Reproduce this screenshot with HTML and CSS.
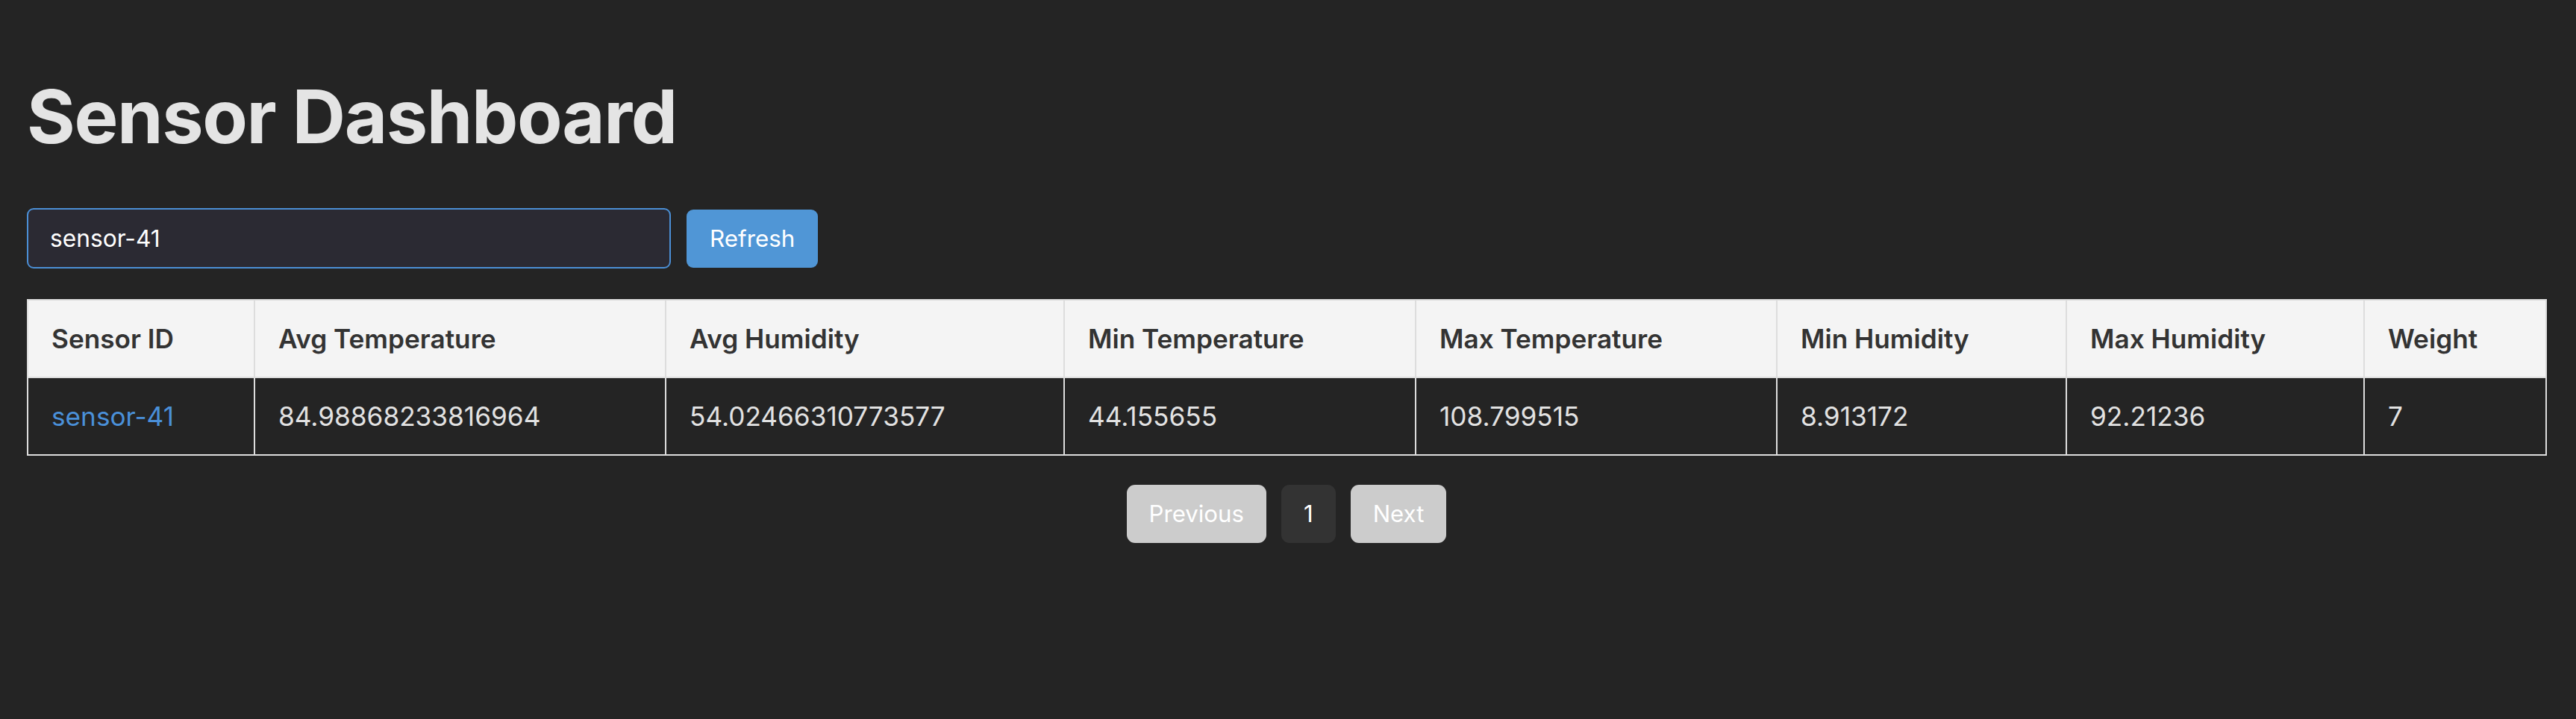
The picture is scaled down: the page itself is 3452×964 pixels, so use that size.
FILE: index.html
```html
<!DOCTYPE html>
<html lang="en">
<head>
<meta charset="utf-8">
<title>Sensor Dashboard</title>
<link rel="stylesheet" href="styles.css">
</head>
<body>
<main class="page">
  <h1 class="title">Sensor Dashboard</h1>
  <div class="controls">
    <input class="search" type="text" value="sensor-41">
    <button class="btn-primary" type="button">Refresh</button>
  </div>
  <table class="data-table">
    <colgroup>
      <col class="c-id">
      <col class="c-avgt">
      <col class="c-avgh">
      <col class="c-mint">
      <col class="c-maxt">
      <col class="c-minh">
      <col class="c-maxh">
      <col class="c-w">
    </colgroup>
    <thead>
      <tr>
        <th>Sensor ID</th>
        <th>Avg Temperature</th>
        <th>Avg Humidity</th>
        <th>Min Temperature</th>
        <th>Max Temperature</th>
        <th>Min Humidity</th>
        <th>Max Humidity</th>
        <th>Weight</th>
      </tr>
    </thead>
    <tbody>
      <tr>
        <td><a class="sensor-link" href="#">sensor-41</a></td>
        <td>84.98868233816964</td>
        <td>54.02466310773577</td>
        <td>44.155655</td>
        <td>108.799515</td>
        <td>8.913172</td>
        <td>92.21236</td>
        <td>7</td>
      </tr>
    </tbody>
  </table>
  <nav class="pagination">
    <button class="page-btn page-btn--disabled" type="button">Previous</button>
    <button class="page-btn page-btn--current" type="button">1</button>
    <button class="page-btn page-btn--disabled" type="button">Next</button>
  </nav>
</main>
</body>
</html>
```
FILE: styles.css
```css
html, body {
  margin: 0;
  padding: 0;
  background: #242424;
}

body {
  font-family: Inter, "Noto Sans", sans-serif;
  color: #e2e2e2;
}

.page {
  padding: 96px 40px 0 36px;
}

.title {
  margin: 0 0 63px;
  font-size: 99px;
  font-weight: 700;
  letter-spacing: -1.4px;
  line-height: normal;
  color: #e4e4e4;
}

.controls {
  display: flex;
  align-items: center;
  gap: 21px;
}

.search {
  box-sizing: border-box;
  width: 863px;
  height: 81px;
  padding: 0 29px;
  border: 2px solid #4b8fd5;
  border-radius: 9px;
  background: #2b2a33;
  color: #ffffff;
  font-family: Inter, "Noto Sans", sans-serif;
  font-size: 31.7px;
  outline: none;
}

.btn-primary {
  box-sizing: border-box;
  height: 78px;
  padding: 0 31px;
  border: none;
  border-radius: 9px;
  background: #5096d6;
  color: #ffffff;
  font-family: Inter, "Noto Sans", sans-serif;
  font-size: 31.4px;
}

.data-table {
  width: 100%;
  margin-top: 41px;
  border-collapse: collapse;
  table-layout: fixed;
  border: 2px solid #dddddd;
}

.c-id { width: 304px; }
.c-avgt { width: 551px; }
.c-avgh { width: 534px; }
.c-mint { width: 471px; }
.c-maxt { width: 484px; }
.c-minh { width: 388px; }
.c-maxh { width: 399px; }
.c-w { width: 244px; }

.data-table th,
.data-table td {
  padding: 30px 31px;
  border: 2px solid #dddddd;
  text-align: left;
  font-size: 35.2px;
  line-height: normal;
  white-space: nowrap;
}

.data-table th {
  background: #f4f4f4;
  color: #333333;
  font-weight: 600;
}

.data-table td {
  background: #242424;
  color: #e2e2e2;
  font-weight: 400;
}

.sensor-link {
  color: #4a90d9;
  text-decoration: none;
}

.pagination {
  display: flex;
  justify-content: center;
  gap: 20px;
  margin-top: 39px;
}

.page-btn {
  box-sizing: border-box;
  height: 78px;
  padding: 0 30px;
  border: none;
  border-radius: 11px;
  color: #ffffff;
  font-family: Inter, "Noto Sans", sans-serif;
  font-size: 31.2px;
}

.page-btn--disabled {
  background: #cccccc;
}

.page-btn--current {
  background: #333333;
}
```
